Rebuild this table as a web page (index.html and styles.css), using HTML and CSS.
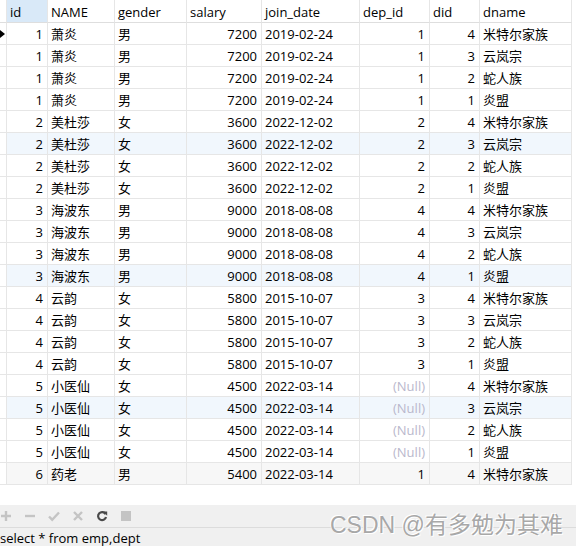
FILE: index.html
```html
<!DOCTYPE html>
<html>
<head>
<meta charset="utf-8">
<link rel="stylesheet" href="styles.css">
</head>
<body>
<div class="grid">
  <div class="row head">
    <div class="c g"></div><div class="c sel">id</div><div class="c">NAME</div><div class="c">gender</div><div class="c">salary</div><div class="c">join_date</div><div class="c">dep_id</div><div class="c">did</div><div class="c">dname</div>
  </div>
  <div class="row"><div class="c g"><span class="arrow"></span></div><div class="c n">1</div><div class="c">萧炎</div><div class="c">男</div><div class="c n">7200</div><div class="c">2019-02-24</div><div class="c n">1</div><div class="c n">4</div><div class="c">米特尔家族</div></div>
  <div class="row"><div class="c g"></div><div class="c n">1</div><div class="c">萧炎</div><div class="c">男</div><div class="c n">7200</div><div class="c">2019-02-24</div><div class="c n">1</div><div class="c n">3</div><div class="c">云岚宗</div></div>
  <div class="row"><div class="c g"></div><div class="c n">1</div><div class="c">萧炎</div><div class="c">男</div><div class="c n">7200</div><div class="c">2019-02-24</div><div class="c n">1</div><div class="c n">2</div><div class="c">蛇人族</div></div>
  <div class="row"><div class="c g"></div><div class="c n">1</div><div class="c">萧炎</div><div class="c">男</div><div class="c n">7200</div><div class="c">2019-02-24</div><div class="c n">1</div><div class="c n">1</div><div class="c">炎盟</div></div>
  <div class="row"><div class="c g"></div><div class="c n">2</div><div class="c">美杜莎</div><div class="c">女</div><div class="c n">3600</div><div class="c">2022-12-02</div><div class="c n">2</div><div class="c n">4</div><div class="c">米特尔家族</div></div>
  <div class="row alt"><div class="c g"></div><div class="c n">2</div><div class="c">美杜莎</div><div class="c">女</div><div class="c n">3600</div><div class="c">2022-12-02</div><div class="c n">2</div><div class="c n">3</div><div class="c">云岚宗</div></div>
  <div class="row"><div class="c g"></div><div class="c n">2</div><div class="c">美杜莎</div><div class="c">女</div><div class="c n">3600</div><div class="c">2022-12-02</div><div class="c n">2</div><div class="c n">2</div><div class="c">蛇人族</div></div>
  <div class="row"><div class="c g"></div><div class="c n">2</div><div class="c">美杜莎</div><div class="c">女</div><div class="c n">3600</div><div class="c">2022-12-02</div><div class="c n">2</div><div class="c n">1</div><div class="c">炎盟</div></div>
  <div class="row"><div class="c g"></div><div class="c n">3</div><div class="c">海波东</div><div class="c">男</div><div class="c n">9000</div><div class="c">2018-08-08</div><div class="c n">4</div><div class="c n">4</div><div class="c">米特尔家族</div></div>
  <div class="row"><div class="c g"></div><div class="c n">3</div><div class="c">海波东</div><div class="c">男</div><div class="c n">9000</div><div class="c">2018-08-08</div><div class="c n">4</div><div class="c n">3</div><div class="c">云岚宗</div></div>
  <div class="row"><div class="c g"></div><div class="c n">3</div><div class="c">海波东</div><div class="c">男</div><div class="c n">9000</div><div class="c">2018-08-08</div><div class="c n">4</div><div class="c n">2</div><div class="c">蛇人族</div></div>
  <div class="row alt"><div class="c g"></div><div class="c n">3</div><div class="c">海波东</div><div class="c">男</div><div class="c n">9000</div><div class="c">2018-08-08</div><div class="c n">4</div><div class="c n">1</div><div class="c">炎盟</div></div>
  <div class="row"><div class="c g"></div><div class="c n">4</div><div class="c">云韵</div><div class="c">女</div><div class="c n">5800</div><div class="c">2015-10-07</div><div class="c n">3</div><div class="c n">4</div><div class="c">米特尔家族</div></div>
  <div class="row"><div class="c g"></div><div class="c n">4</div><div class="c">云韵</div><div class="c">女</div><div class="c n">5800</div><div class="c">2015-10-07</div><div class="c n">3</div><div class="c n">3</div><div class="c">云岚宗</div></div>
  <div class="row"><div class="c g"></div><div class="c n">4</div><div class="c">云韵</div><div class="c">女</div><div class="c n">5800</div><div class="c">2015-10-07</div><div class="c n">3</div><div class="c n">2</div><div class="c">蛇人族</div></div>
  <div class="row"><div class="c g"></div><div class="c n">4</div><div class="c">云韵</div><div class="c">女</div><div class="c n">5800</div><div class="c">2015-10-07</div><div class="c n">3</div><div class="c n">1</div><div class="c">炎盟</div></div>
  <div class="row"><div class="c g"></div><div class="c n">5</div><div class="c">小医仙</div><div class="c">女</div><div class="c n">4500</div><div class="c">2022-03-14</div><div class="c n null">(Null)</div><div class="c n">4</div><div class="c">米特尔家族</div></div>
  <div class="row alt"><div class="c g"></div><div class="c n">5</div><div class="c">小医仙</div><div class="c">女</div><div class="c n">4500</div><div class="c">2022-03-14</div><div class="c n null">(Null)</div><div class="c n">3</div><div class="c">云岚宗</div></div>
  <div class="row"><div class="c g"></div><div class="c n">5</div><div class="c">小医仙</div><div class="c">女</div><div class="c n">4500</div><div class="c">2022-03-14</div><div class="c n null">(Null)</div><div class="c n">2</div><div class="c">蛇人族</div></div>
  <div class="row"><div class="c g"></div><div class="c n">5</div><div class="c">小医仙</div><div class="c">女</div><div class="c n">4500</div><div class="c">2022-03-14</div><div class="c n null">(Null)</div><div class="c n">1</div><div class="c">炎盟</div></div>
  <div class="row last"><div class="c g"></div><div class="c n">6</div><div class="c">药老</div><div class="c">男</div><div class="c n">5400</div><div class="c">2022-03-14</div><div class="c n">1</div><div class="c n">4</div><div class="c">米特尔家族</div></div>
</div>
<div class="spacer"></div>
<div class="toolbar">
  <svg class="ic" viewBox="0 0 12 12"><path d="M6 1v10M1 6h10" stroke="#c4c4c4" stroke-width="2.4"/></svg>
  <svg class="ic" viewBox="0 0 12 12"><path d="M1 6h10" stroke="#c4c4c4" stroke-width="2.4"/></svg>
  <svg class="ic" viewBox="0 0 12 12"><path d="M1 6.5l3.2 3.2L11 2.5" fill="none" stroke="#c4c4c4" stroke-width="2.4"/></svg>
  <svg class="ic" viewBox="0 0 12 12"><path d="M2 2l8 8M10 2l-8 8" stroke="#c4c4c4" stroke-width="2.4"/></svg>
  <svg class="ic" viewBox="0 0 12 12"><path d="M9.6 4.2A4 4 0 1 0 10 7" fill="none" stroke="#4a4a4a" stroke-width="2.2"/><path d="M7 1.5h4.2v4.2z" fill="#4a4a4a"/></svg>
  <svg class="ic" viewBox="0 0 12 12"><rect x="1" y="1" width="10" height="10" fill="#c4c4c4"/></svg>
</div>
<div class="sql">select * from emp,dept</div>
<div class="mark">CSDN @有多勉为其难</div>
</body>
</html>
```
FILE: styles.css
```css
html, body {
  margin: 0;
  padding: 0;
  background: #ffffff;
  width: 576px;
  height: 546px;
  overflow: hidden;
  font-family: "Open Sans", "Noto Sans CJK SC", sans-serif;
  font-size: 13px;
  color: #000;
  position: relative;
}
.grid {
  width: 576px;
}
.row {
  display: grid;
  grid-template-columns: 7px 41px 67px 72px 75px 98px 70px 50px 92px;
  height: 22px;
}
.row.head {
  height: 23px;
}
.c {
  box-sizing: border-box;
  border-right: 1px solid #e6e6e6;
  border-bottom: 1px solid #e6e6e6;
  padding: 0 3px;
  line-height: 23px;
  white-space: nowrap;
  overflow: hidden;
}
.head .c {
  line-height: 24px;
  border-bottom-color: #dedede;
}
.head .sel {
  background: #d9e9f8;
}
.c.g {
  padding: 0;
  position: relative;
}
.c.n {
  text-align: right;
  padding-right: 4px;
}
.c.null {
  color: #b9b8cc;
}
.row.alt .c {
  background: #f1f7fd;
}
.row.alt .c.g, .row.last .c.g {
  background: #fff;
}
.row.last .c {
  background: #f7f7f7;
}
.arrow {
  position: absolute;
  left: 0;
  top: 7px;
  width: 0;
  height: 0;
  border-left: 5px solid #000;
  border-top: 4px solid transparent;
  border-bottom: 4px solid transparent;
}
.spacer {
  height: 20px;
}
.toolbar {
  background: #f0f0f0;
  height: 23px;
  display: flex;
  align-items: center;
  gap: 12px;
  padding-left: 0;
  border-bottom: 1px solid #dcdcdc;
  box-sizing: border-box;
}
.ic {
  width: 12px;
  height: 12px;
  display: block;
}
.sql {
  background: #f0f0f0;
  height: 18px;
  line-height: 21px;
  padding-left: 0;
  white-space: nowrap;
}
.mark {
  position: absolute;
  left: 330px;
  top: 511px;
  font-family: "Liberation Sans", "Noto Sans CJK SC", sans-serif;
  font-size: 23px;
  line-height: 28px;
  color: #a8a8a8;
  text-shadow: 0 0 1px #fff, 1px 1px 0 #fff, -1px -1px 0 #fff;
  white-space: nowrap;
}
```
